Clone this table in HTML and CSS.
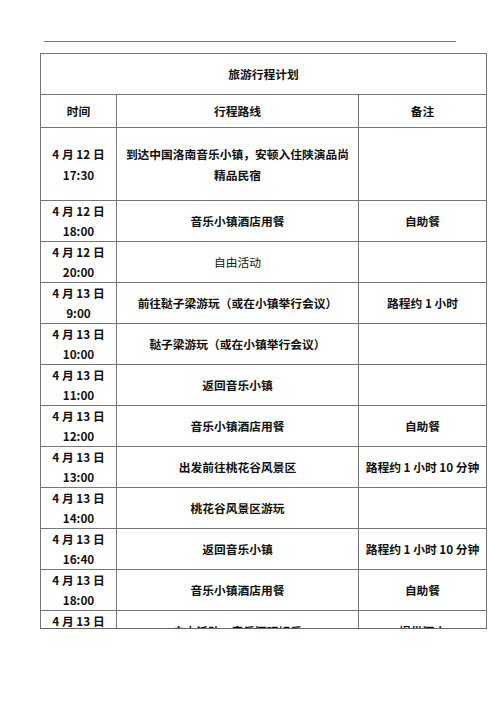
FILE: index.html
```html
<!DOCTYPE html>
<html lang="zh-CN">
<head>
<meta charset="utf-8">
<link rel="stylesheet" href="styles.css">
</head>
<body>
<div class="page">
  <div class="rule"></div>
  <div class="clip">
    <table class="plan">
      <colgroup>
        <col class="c-time">
        <col class="c-route">
        <col class="c-note">
      </colgroup>
      <tr class="r-title"><td colspan="3">旅游行程计划</td></tr>
      <tr class="r-head"><td>时间</td><td>行程路线</td><td>备注</td></tr>
      <tr class="r-tall"><td>4 月 12 日<br>17:30</td><td>到达中国洛南音乐小镇，安顿入住陕演品尚精品民宿</td><td></td></tr>
      <tr class="r-40"><td>4 月 12 日<br>18:00</td><td>音乐小镇酒店用餐</td><td>自助餐</td></tr>
      <tr class="r-41"><td>4 月 12 日<br>20:00</td><td class="light">自由活动</td><td></td></tr>
      <tr class="r-41"><td>4 月 13 日<br>9:00</td><td>前往鞑子梁游玩（或在小镇举行会议）</td><td>路程约 1 小时</td></tr>
      <tr class="r-41"><td>4 月 13 日<br>10:00</td><td>鞑子梁游玩（或在小镇举行会议）</td><td></td></tr>
      <tr class="r-41"><td>4 月 13 日<br>11:00</td><td>返回音乐小镇</td><td></td></tr>
      <tr class="r-41"><td>4 月 13 日<br>12:00</td><td>音乐小镇酒店用餐</td><td>自助餐</td></tr>
      <tr class="r-40"><td>4 月 13 日<br>13:00</td><td>出发前往桃花谷风景区</td><td>路程约 1 小时 10 分钟</td></tr>
      <tr class="r-41"><td>4 月 13 日<br>14:00</td><td>桃花谷风景区游玩</td><td></td></tr>
      <tr class="r-41"><td>4 月 13 日<br>16:40</td><td>返回音乐小镇</td><td>路程约 1 小时 10 分钟</td></tr>
      <tr class="r-40"><td>4 月 13 日<br>18:00</td><td>音乐小镇酒店用餐</td><td>自助餐</td></tr>
      <tr class="r-41"><td>4 月 13 日<br>19:00</td><td>自由活动，音乐酒吧娱乐</td><td>提供酒水</td></tr>
    </table>
  </div>
</div>
</body>
</html>
```
FILE: styles.css
```css
html, body {
  margin: 0;
  padding: 0;
  background: #ffffff;
}

.page {
  width: 500px;
  height: 707px;
  overflow: hidden;
  padding-top: 41px;
  box-sizing: border-box;
  font-family: "Noto Sans CJK SC", "Noto Sans", sans-serif;
  color: #111111;
}

.rule {
  width: 412px;
  height: 1px;
  margin-left: 44px;
  background: #777777;
}

.clip {
  margin-top: 11px;
  margin-left: 40px;
  width: 447px;
  height: 575px;
  overflow: hidden;
  border-bottom: 1px solid #666666;
  box-sizing: content-box;
}

.plan {
  width: 446px;
  table-layout: fixed;
  border-collapse: collapse;
  font-size: 11.75px;
  font-weight: 700;
  line-height: 20px;
}

.c-time { width: 76px; }
.c-route { width: 242px; }
.c-note { width: 128px; }

.plan td {
  border: 1px solid #777777;
  padding: 0 4px;
  text-align: center;
  vertical-align: middle;
  box-sizing: border-box;
}

.plan td.light {
  font-weight: 400;
}

.r-title td { height: 41px; }
.r-head td { height: 33px; }
.r-tall td { height: 73px; padding: 0 6px; line-height: 21px; }
.r-40 td { height: 40px; }
.r-41 td { height: 41px; }
```
